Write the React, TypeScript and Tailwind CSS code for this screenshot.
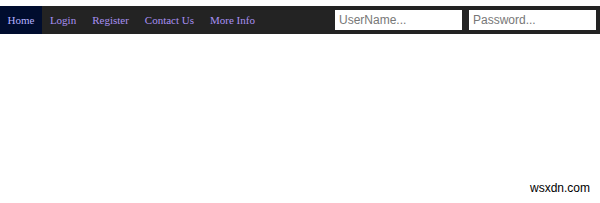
const links = ['Login', 'Register', 'Contact Us', 'More Info'];

export default function App() {
  return (
    <div className="relative w-[600px] h-[203px] bg-white">
      <div className="h-[6px]" />
      <nav className="flex h-[28px] items-stretch bg-[#232323]">
        <a className="flex items-center bg-[#000d2e] px-[7.5px] text-[11px] text-[#b4b0ff] [font-family:'Liberation_Serif',serif]">
          Home
        </a>
        {links.map((l) => (
          <a
            key={l}
            className="flex items-center px-[8px] text-[11px] text-[#a890f2] [font-family:'Liberation_Serif',serif]"
          >
            {l}
          </a>
        ))}
        <div className="ml-auto flex items-center gap-[7px] pr-[4px]">
          <input
            placeholder="UserName..."
            className="h-[20px] w-[127px] bg-white px-[4px] text-[12px] text-[#333] outline-none placeholder:text-[#777] [font-family:'Liberation_Sans',sans-serif]"
          />
          <input
            placeholder="Password..."
            className="h-[20px] w-[127px] bg-white px-[4px] text-[12px] text-[#333] outline-none placeholder:text-[#777] [font-family:'Liberation_Sans',sans-serif]"
          />
        </div>
      </nav>
      <div className="absolute bottom-[6px] right-[10px] text-[12px] text-black [font-family:'Liberation_Sans',sans-serif]">
        wsxdn.com
      </div>
    </div>
  );
}
